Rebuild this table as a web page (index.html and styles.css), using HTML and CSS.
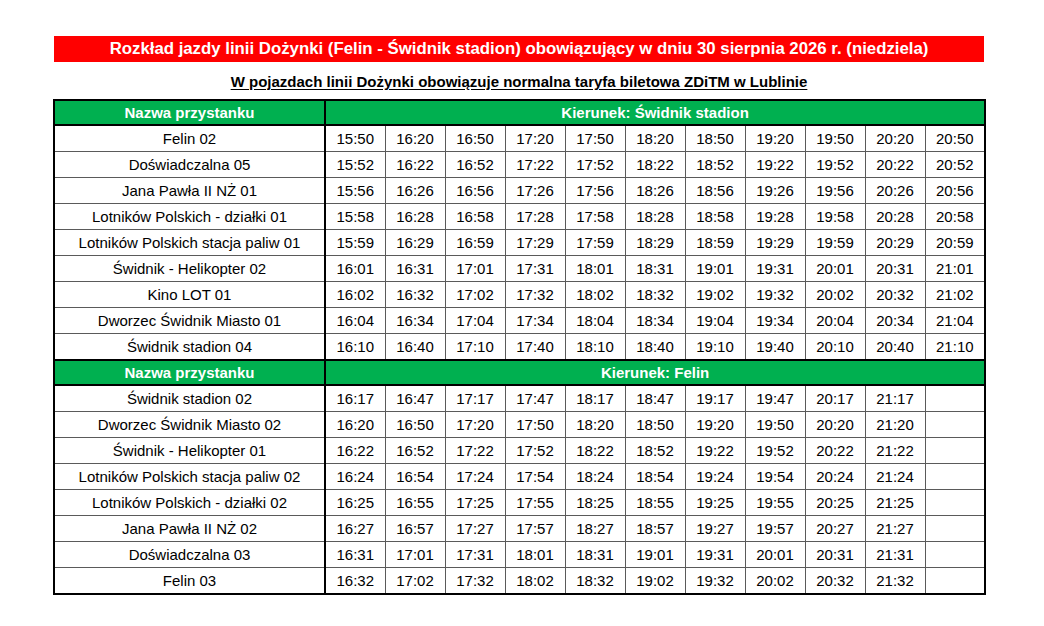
FILE: index.html
```html
<!DOCTYPE html>
<html lang="pl">
<head>
<meta charset="utf-8">
<title>Rozkład jazdy linii Dożynki</title>
<link rel="stylesheet" href="styles.css">
</head>
<body>
<div class="page">
  <div class="banner">Rozkład jazdy linii Dożynki (Felin - Świdnik stadion) obowiązujący w dniu 30 sierpnia 2026 r. (niedziela)</div>
  <div class="subtitle"><span>W pojazdach linii Dożynki obowiązuje normalna taryfa biletowa ZDiTM w Lublinie</span></div>
  <table class="timetable">
    <colgroup>
      <col class="c-stop">
      <col class="c-time"><col class="c-time"><col class="c-time"><col class="c-time"><col class="c-time"><col class="c-time"><col class="c-time"><col class="c-time"><col class="c-time"><col class="c-time"><col class="c-time">
    </colgroup>
    <tbody>
      <tr class="head"><th>Nazwa przystanku</th><th colspan="11">Kierunek: Świdnik stadion</th></tr>
      <tr><td class="stop">Felin 02</td><td>15:50</td><td>16:20</td><td>16:50</td><td>17:20</td><td>17:50</td><td>18:20</td><td>18:50</td><td>19:20</td><td>19:50</td><td>20:20</td><td>20:50</td></tr>
      <tr><td class="stop">Doświadczalna 05</td><td>15:52</td><td>16:22</td><td>16:52</td><td>17:22</td><td>17:52</td><td>18:22</td><td>18:52</td><td>19:22</td><td>19:52</td><td>20:22</td><td>20:52</td></tr>
      <tr><td class="stop">Jana Pawła II NŻ 01</td><td>15:56</td><td>16:26</td><td>16:56</td><td>17:26</td><td>17:56</td><td>18:26</td><td>18:56</td><td>19:26</td><td>19:56</td><td>20:26</td><td>20:56</td></tr>
      <tr><td class="stop">Lotników Polskich - działki 01</td><td>15:58</td><td>16:28</td><td>16:58</td><td>17:28</td><td>17:58</td><td>18:28</td><td>18:58</td><td>19:28</td><td>19:58</td><td>20:28</td><td>20:58</td></tr>
      <tr><td class="stop">Lotników Polskich stacja paliw 01</td><td>15:59</td><td>16:29</td><td>16:59</td><td>17:29</td><td>17:59</td><td>18:29</td><td>18:59</td><td>19:29</td><td>19:59</td><td>20:29</td><td>20:59</td></tr>
      <tr><td class="stop">Świdnik - Helikopter 02</td><td>16:01</td><td>16:31</td><td>17:01</td><td>17:31</td><td>18:01</td><td>18:31</td><td>19:01</td><td>19:31</td><td>20:01</td><td>20:31</td><td>21:01</td></tr>
      <tr><td class="stop">Kino LOT 01</td><td>16:02</td><td>16:32</td><td>17:02</td><td>17:32</td><td>18:02</td><td>18:32</td><td>19:02</td><td>19:32</td><td>20:02</td><td>20:32</td><td>21:02</td></tr>
      <tr><td class="stop">Dworzec Świdnik Miasto 01</td><td>16:04</td><td>16:34</td><td>17:04</td><td>17:34</td><td>18:04</td><td>18:34</td><td>19:04</td><td>19:34</td><td>20:04</td><td>20:34</td><td>21:04</td></tr>
      <tr><td class="stop">Świdnik stadion 04</td><td>16:10</td><td>16:40</td><td>17:10</td><td>17:40</td><td>18:10</td><td>18:40</td><td>19:10</td><td>19:40</td><td>20:10</td><td>20:40</td><td>21:10</td></tr>
      <tr class="head"><th>Nazwa przystanku</th><th colspan="11">Kierunek: Felin</th></tr>
      <tr><td class="stop">Świdnik stadion 02</td><td>16:17</td><td>16:47</td><td>17:17</td><td>17:47</td><td>18:17</td><td>18:47</td><td>19:17</td><td>19:47</td><td>20:17</td><td>21:17</td><td></td></tr>
      <tr><td class="stop">Dworzec Świdnik Miasto 02</td><td>16:20</td><td>16:50</td><td>17:20</td><td>17:50</td><td>18:20</td><td>18:50</td><td>19:20</td><td>19:50</td><td>20:20</td><td>21:20</td><td></td></tr>
      <tr><td class="stop">Świdnik - Helikopter 01</td><td>16:22</td><td>16:52</td><td>17:22</td><td>17:52</td><td>18:22</td><td>18:52</td><td>19:22</td><td>19:52</td><td>20:22</td><td>21:22</td><td></td></tr>
      <tr><td class="stop">Lotników Polskich stacja paliw 02</td><td>16:24</td><td>16:54</td><td>17:24</td><td>17:54</td><td>18:24</td><td>18:54</td><td>19:24</td><td>19:54</td><td>20:24</td><td>21:24</td><td></td></tr>
      <tr><td class="stop">Lotników Polskich - działki 02</td><td>16:25</td><td>16:55</td><td>17:25</td><td>17:55</td><td>18:25</td><td>18:55</td><td>19:25</td><td>19:55</td><td>20:25</td><td>21:25</td><td></td></tr>
      <tr><td class="stop">Jana Pawła II NŻ 02</td><td>16:27</td><td>16:57</td><td>17:27</td><td>17:57</td><td>18:27</td><td>18:57</td><td>19:27</td><td>19:57</td><td>20:27</td><td>21:27</td><td></td></tr>
      <tr><td class="stop">Doświadczalna 03</td><td>16:31</td><td>17:01</td><td>17:31</td><td>18:01</td><td>18:31</td><td>19:01</td><td>19:31</td><td>20:01</td><td>20:31</td><td>21:31</td><td></td></tr>
      <tr><td class="stop">Felin 03</td><td>16:32</td><td>17:02</td><td>17:32</td><td>18:02</td><td>18:32</td><td>19:02</td><td>19:32</td><td>20:02</td><td>20:32</td><td>21:32</td><td></td></tr>
    </tbody>
  </table>
</div>
</body>
</html>
```
FILE: styles.css
```css
html, body {
  margin: 0;
  padding: 0;
  background: #ffffff;
}

body {
  font-family: "Liberation Sans", Arial, sans-serif;
  color: #000000;
}

.page {
  width: 932px;
  margin-left: 53px;
  padding-top: 36px;
}

.banner {
  margin: 0 1px;
  height: 26px;
  line-height: 26px;
  background: #ff0000;
  color: #ffffff;
  font-weight: bold;
  font-size: 16.8px;
  text-align: center;
  white-space: nowrap;
}

.subtitle {
  margin: 10px 0 7px;
  line-height: 20px;
  font-size: 15px;
  font-weight: bold;
  text-align: center;
}

.subtitle span {
  text-decoration: underline;
  text-underline-offset: 2px;
}

.timetable {
  width: 932px;
  border-collapse: collapse;
  table-layout: fixed;
  border: 2px solid #000000;
  font-size: 15px;
}

.c-stop {
  width: 271px;
}

.c-time {
  width: 60px;
}

.timetable td,
.timetable th {
  height: 25px;
  padding: 0;
  text-align: center;
  vertical-align: middle;
  border: 1px solid #5a5a5a;
  white-space: nowrap;
}

.timetable td.stop {
  border-right: 2px solid #000000;
}

.timetable tr.head th {
  height: 23px;
  background: #00b050;
  color: #ffffff;
  font-weight: bold;
  font-size: 15px;
  border: 2px solid #000000;
}
```
